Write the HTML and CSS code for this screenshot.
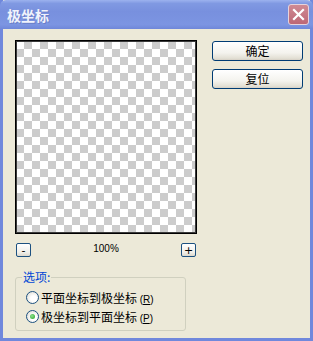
FILE: index.html
```html
<!DOCTYPE html>
<html lang="zh-CN">
<head>
    <meta charset="UTF-8">
    <title>极坐标</title>
    <link rel="stylesheet" href="styles.css">
</head>
<body>
    <div class="window">
        <div class="title-bar">
            <span class="title-text">极坐标</span>
            <button class="close-button" aria-label="关闭">
                <svg width="13" height="13" viewBox="0 0 13 13">
                    <path d="M2 2 L11 11 M11 2 L2 11" stroke="#fff" stroke-width="2.2" stroke-linecap="square"/>
                </svg>
            </button>
        </div>
        <div class="content">
            <div class="left-col">
                <div class="preview"></div>
                <div class="zoom-row">
                    <button class="zoom-button">-</button>
                    <span class="zoom-value">100%</span>
                    <button class="zoom-button">+</button>
                </div>
                <fieldset class="options">
                    <legend>选项:</legend>
                    <label class="radio-row">
                        <span class="radio"></span>
                        <span class="radio-text">平面坐标到极坐标 <span class="key">(<u>R</u>)</span></span>
                    </label>
                    <label class="radio-row">
                        <span class="radio checked"></span>
                        <span class="radio-text">极坐标到平面坐标 <span class="key">(<u>P</u>)</span></span>
                    </label>
                </fieldset>
            </div>
            <div class="right-col">
                <button class="push-button">确定</button>
                <button class="push-button">复位</button>
            </div>
        </div>
    </div>
</body>
</html>
```

FILE: styles.css
```css
body {
    margin: 0;
    font-family: "Liberation Sans", "Noto Sans CJK SC", sans-serif;
    background-color: #ece9d8;
}

.window {
    width: 313px;
    height: 341px;
    box-sizing: border-box;
    display: flex;
    flex-direction: column;
    border-left: 3px solid #7088dc;
    border-right: 3px solid #7088dc;
    border-bottom: 3px solid #7088dc;
    background-color: #ece9d8;
}

.title-bar {
    height: 29px;
    margin: 0 -3px;
    padding: 0 4px 0 7px;
    display: flex;
    align-items: center;
    justify-content: space-between;
    background: linear-gradient(#9cb2ee 0%, #8099e2 12%, #7890de 40%, #7c95e2 85%, #6f87d9 100%);
    border-radius: 6px 6px 0 0;
    box-sizing: border-box;
}

.title-text {
    color: #f0f3fc;
    font-family: "Noto Sans CJK SC", sans-serif;
    font-size: 14px;
    font-weight: bold;
    text-shadow: 1px 1px 0 #6a7fc8;
    margin-top: 1px;
}

.close-button {
    width: 21px;
    height: 21px;
    padding: 0;
    display: flex;
    align-items: center;
    justify-content: center;
    background: linear-gradient(#cf8a94, #bd6775);
    border: 1px solid #e6d3dc;
    border-radius: 3px;
}

.content {
    flex: 1;
    display: flex;
    gap: 15px;
    padding: 11px 7px 0 12px;
}

.left-col {
    width: 182px;
    display: flex;
    flex-direction: column;
}

.preview {
    width: 182px;
    height: 194px;
    box-sizing: border-box;
    border: 1px solid #000;
    box-shadow: inset 0 0 0 1px #3a3a3a;
    background-color: #fff;
    background-image:
        linear-gradient(45deg, #cccccc 25%, transparent 25%, transparent 75%, #cccccc 75%),
        linear-gradient(45deg, #cccccc 25%, transparent 25%, transparent 75%, #cccccc 75%);
    background-size: 16px 16px;
    background-position: 0 0, 8px 8px;
}

.zoom-row {
    margin-top: 9px;
    padding: 0 1px;
    height: 14px;
    display: flex;
    align-items: center;
    justify-content: space-between;
}

.zoom-button {
    width: 15px;
    height: 14px;
    padding: 0;
    box-sizing: border-box;
    border: 1px solid #1c5180;
    border-radius: 2px;
    background: linear-gradient(#ffffff, #f0efea 70%, #dcd8cc);
    font-family: "DejaVu Sans", sans-serif;
    font-size: 11px;
    line-height: 11px;
    color: #000;
}

.zoom-value {
    font-size: 10px;
    color: #000;
    margin-top: -3px;
}

.options {
    margin: 12px 0 0 0;
    width: 171px;
    box-sizing: border-box;
    padding: 3px 6px 4px 6px;
    border: 1px solid #d0d0bf;
    border-radius: 3px;
}

.options legend {
    padding: 0 1px;
    font-family: "Noto Sans CJK SC", sans-serif;
    font-size: 12px;
    line-height: 16px;
    color: #0046d5;
}

.radio-row {
    height: 19px;
    display: flex;
    align-items: center;
    gap: 2px;
    margin-left: 4px;
}

.radio {
    width: 13px;
    height: 13px;
    box-sizing: border-box;
    border: 1px solid #1c5180;
    border-radius: 50%;
    background: radial-gradient(circle at 60% 60%, #ffffff 30%, #e8e7e1 70%, #d4d2ca);
    display: flex;
    align-items: center;
    justify-content: center;
}

.radio.checked::after {
    content: "";
    width: 5px;
    height: 5px;
    border-radius: 50%;
    background: radial-gradient(circle at 40% 40%, #8ee08e, #21a121);
}

.radio-text {
    font-family: "Noto Sans CJK SC", sans-serif;
    font-size: 12px;
    color: #000;
    white-space: nowrap;
}

.key {
    font-family: "Liberation Sans", sans-serif;
    font-size: 10px;
}

.right-col {
    width: 91px;
    display: flex;
    flex-direction: column;
    gap: 8px;
    padding-top: 1px;
}

.push-button {
    width: 91px;
    height: 20px;
    padding: 0;
    border: 1px solid #003c74;
    border-radius: 3px;
    background: linear-gradient(#ffffff, #f4f3ee 60%, #e3e0d5 90%, #d6d0c5);
    font-family: "Noto Sans CJK SC", sans-serif;
    font-size: 12px;
    line-height: 16px;
    color: #000;
}
```
